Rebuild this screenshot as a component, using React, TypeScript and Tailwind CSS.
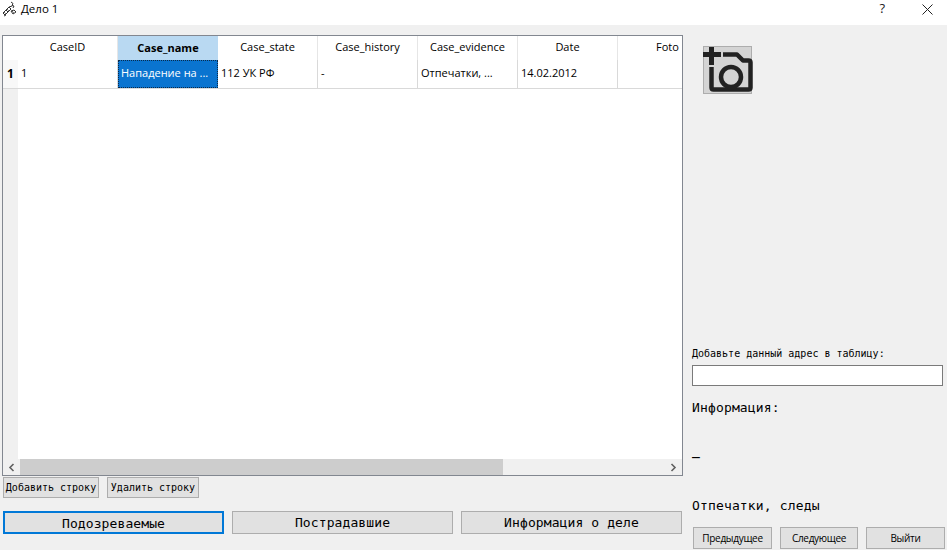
const ui = { fontFamily: '"Open Sans", "Noto Sans", sans-serif' };
const mono = { fontFamily: '"DejaVu Sans Mono", monospace' };

const cols = ["CaseID", "Case_name", "Case_state", "Case_history", "Case_evidence", "Date", "Foto"];
const vals = ["1", "Нападение на ...", "112 УК РФ", "-", "Отпечатки, ...", "14.02.2012", ""];

function AppIcon() {
  return (
    <svg width="15" height="16" viewBox="0 0 15 16" fill="none" stroke="#333" strokeWidth="1">
      <path d="M9 1l2 1.500-1 2 2 .5-1 2M1 12l3-3 2 2-3 3zM4 9l3-3 2 2-3 3zM7 6l3-1M2 15l2-1M9 10l3-1 2 2-3 2z" />
      <path d="M2 11l2 2M5 8l2 2M10 10l2 2" strokeDasharray="1 1" />
    </svg>
  );
}

function CameraIcon() {
  return (
    <svg className="overflow-visible" width="47" height="46" viewBox="0 0 47 46" fill="none" stroke="#222">
      <path d="M7.500 0v18M-1 7.500h18" strokeWidth="5" />
      <path d="M19 7.500h14l6 6h5.500c1.300 0 2 .7 2 2v25c0 1.300-.7 2-2 2H9.500c-1.300 0-2-.7-2-2V20" strokeWidth="4.500" strokeLinejoin="round" />
      <circle cx="27" cy="30" r="10" strokeWidth="4.500" />
    </svg>
  );
}

function Chevron({ dir }: { dir: "left" | "right" }) {
  return (
    <svg width="7" height="9" viewBox="0 0 7 9" fill="none" stroke="#606060" strokeWidth="1.600">
      <path d={dir === "left" ? "M5.500 1L2 4.500 5.500 8" : "M1.500 1L5 4.500 1.500 8"} />
    </svg>
  );
}

function Table() {
  return (
    <div className="flex h-[441px] w-[681px] flex-col overflow-hidden border border-[#828790] bg-white">
      <div className="flex h-[24px] shrink-0 pl-[15px]">
        {cols.map((c, i) => (
          <div
            key={c}
            className={
              i === 1
                ? "flex w-[100px] shrink-0 items-center justify-center bg-[#b9d9f2] text-[11px] font-bold text-black"
                : i === 6
                  ? "flex w-[65px] shrink-0 items-center overflow-hidden pb-[1px] pl-[38px] text-[11px] text-black"
                  : "flex w-[100px] shrink-0 items-center justify-center border-r border-[#e6e6e6] pb-[1px] text-[11px] text-black"
            }
          >
            {c}
          </div>
        ))}
      </div>
      <div className="flex h-[29px] shrink-0 border-b border-[#d9d9d9]">
        <div className="flex w-[15px] shrink-0 items-center justify-center bg-[#f8f8f8] text-[12px] font-bold text-black">1</div>
        {vals.map((v, i) => (
          <div
            key={i}
            className={
              i === 1
                ? "flex w-[100px] shrink-0 items-center border border-dotted border-[#0a2a4a] bg-[#0a74d0] pb-[1px] pl-[2px] text-[11px] whitespace-nowrap text-white"
                : i === 6
                  ? "flex w-[65px] shrink-0 items-center pl-[3px] text-[11px]"
                  : "flex w-[100px] shrink-0 items-center border-r border-[#d9d9d9] pb-[1px] pl-[3px] text-[11px] whitespace-nowrap text-black"
            }
          >
            {v}
          </div>
        ))}
      </div>
      <div className="flex min-h-0 flex-1">
        <div className="w-[15px] shrink-0 bg-[#f0f0f0]" />
        <div className="flex-1 bg-white" />
      </div>
      <div className="flex h-[16px] shrink-0 items-center bg-[#f0f0f0]">
        <div className="flex h-full w-[17px] shrink-0 items-center justify-center">
          <Chevron dir="left" />
        </div>
        <div className="h-full w-[483px] shrink-0 bg-[#cdcdcd]" />
        <div className="flex-1" />
        <div className="flex h-full w-[17px] shrink-0 items-center justify-center">
          <Chevron dir="right" />
        </div>
      </div>
    </div>
  );
}

function SmallBtn({ children, w }: { children: string; w: string }) {
  return (
    <button className={`h-[21px] ${w} border border-[#adadad] bg-[#e1e1e1] text-[10px] whitespace-nowrap text-black`} style={mono}>
      {children}
    </button>
  );
}

function BigBtn({ children, focus }: { children: string; focus?: boolean }) {
  return (
    <button
      className={
        focus
          ? "h-[23px] w-[221px] border-2 border-[#0078d7] bg-[#e1e1e1] pt-[1px] text-[13px] tracking-[0.1px] text-black"
          : "h-[23px] w-[221px] border border-[#adadad] bg-[#e1e1e1] pt-[1px] text-[13px] tracking-[0.1px] text-black"
      }
      style={mono}
    >
      {children}
    </button>
  );
}

function NavBtn({ children, w }: { children: string; w: string }) {
  return (
    <button className={`h-[22px] ${w} border border-[#adadad] bg-[#e1e1e1] text-[10px] tracking-[-0.3px] text-black`} style={ui}>
      {children}
    </button>
  );
}

export default function App() {
  return (
    <div className="flex h-[550px] w-[947px] flex-col overflow-hidden bg-[#f0f0f0]" style={ui}>
      <div className="flex h-[25px] shrink-0 items-center bg-white pb-[7px] pl-[2px]">
        <AppIcon />
        <span className="ml-[4px] text-[11.5px] text-black">Дело 1</span>
        <span className="ml-auto text-[13px] text-[#222]">?</span>
        <svg className="mr-[14px] ml-[37px]" width="11" height="11" viewBox="0 0 11 11" stroke="#222" strokeWidth="1">
          <path d="M.5.5l10 10M10.500.5l-10 10" />
        </svg>
      </div>
      <div className="flex min-h-0 flex-1">
        <div className="flex w-[689px] shrink-0 flex-col pt-[10px] pl-[2px]">
          <Table />
          <div className="mt-[1px] flex gap-[8px] pl-[1px]">
            <SmallBtn w="w-[96px]">Добавить строку</SmallBtn>
            <SmallBtn w="w-[92px]">Удалить строку</SmallBtn>
          </div>
          <div className="mt-[13px] flex gap-[8px] pl-[1px]">
            <BigBtn focus>Подозреваемые</BigBtn>
            <BigBtn>Пострадавшие</BigBtn>
            <BigBtn>Информация о деле</BigBtn>
          </div>
        </div>
        <div className="flex min-w-0 flex-1 flex-col pl-[3px]">
          <div className="mt-[21px] ml-[11px] h-[48px] w-[49px] border border-[#adadad] bg-[#d4d4d4]">
            <CameraIcon />
          </div>
          <div className="mt-[253px] h-[14px] text-[10px] leading-[14px] whitespace-nowrap text-black" style={mono}>
            Добавьте данный адрес в таблицу:
          </div>
          <div className="mt-[4px] h-[21px] w-[251px] border border-[#7a7a7a] bg-white" />
          <div className="mt-[14px] h-[16px] text-[13px] leading-[16px] tracking-[0.15px] text-black" style={mono}>
            Информация:
          </div>
          <div className="mt-[27px] h-[16px] text-[13px] leading-[16px] font-bold text-black" style={mono}>
            _
          </div>
          <div className="mt-[39px] h-[16px] text-[13px] leading-[16px] tracking-[0.15px] text-black" style={mono}>
            Отпечатки, следы
          </div>
          <div className="mt-[13px] flex gap-[8px] pl-[1px]">
            <NavBtn w="w-[79px]">Предыдущее</NavBtn>
            <NavBtn w="w-[78px]">Следующее</NavBtn>
            <NavBtn w="w-[79px]">Выйти</NavBtn>
          </div>
        </div>
      </div>
    </div>
  );
}
